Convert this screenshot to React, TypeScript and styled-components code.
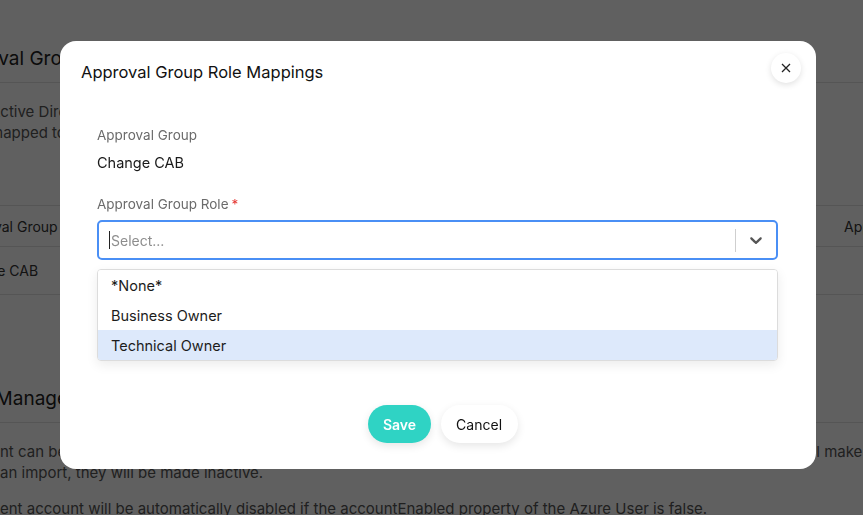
import React from 'react';
import styled, { createGlobalStyle } from 'styled-components';

const GlobalStyle = createGlobalStyle`
  html, body {
    margin: 0;
    padding: 0;
    background: #ffffff;
    font-family: "Inter", "Noto Sans", sans-serif;
    overflow: hidden;
  }
`;

const roles = ['*None*', 'Business Owner', 'Technical Owner'];

/* ===== background page ===== */
const Page = styled.div`
  width: 1000px;
  height: 515px;
  margin-left: -46px;
  color: #333;
  font-size: 15px;
`;

const Section = styled.section`
  padding-top: ${(p: { top: number }) => p.top}px;
`;

const SectionTitle = styled.h2`
  margin: 0;
  padding-bottom: 12px;
  font-size: 19px;
  font-weight: 400;
  color: #222;
  border-bottom: 1px solid #e2e2e2;
  text-indent: -10px;
`;

const Para = styled.p<{ gap?: number; indent?: number }>`
  margin: ${(p) => p.gap ?? 18}px 0 0;
  padding-left: ${(p) => p.indent ?? 36}px;
  line-height: 21px;
  color: #555;
  white-space: nowrap;
`;

const Table = styled.div`
  margin-top: 62px;
  border-top: 1px solid #e2e2e2;
`;

const TableRow = styled.div<{ head?: boolean }>`
  display: grid;
  grid-template-columns: 1fr 110px;
  height: ${(p) => (p.head ? 40 : 47)}px;
  align-items: center;
  border-bottom: 1px solid #e2e2e2;
  font-size: 14px;
  white-space: nowrap;
`;

/* ===== modal ===== */
const Overlay = styled.div`
  position: fixed;
  inset: 0;
  background: rgba(0, 0, 0, 0.625);
`;

const Modal = styled.div`
  position: absolute;
  left: 60px;
  top: 41px;
  width: 756px;
  height: 428px;
  background: #fff;
  border-radius: 16px;
  box-sizing: border-box;
  display: flex;
  flex-direction: column;
`;

const ModalHeader = styled.div`
  display: flex;
  justify-content: space-between;
  align-items: flex-start;
  padding: 12px 15px 0 21px;
`;

const ModalTitle = styled.h1`
  margin: 8px 0 0;
  font-size: 16.5px;
  font-weight: 400;
  color: #111;
  line-height: 22px;
`;

const CloseButton = styled.button`
  width: 30px;
  height: 30px;
  border-radius: 50%;
  border: none;
  background: #fff;
  box-shadow: 0 2px 6px rgba(0, 0, 0, 0.12);
  display: flex;
  align-items: center;
  justify-content: center;
  padding: 0;
  cursor: pointer;
`;

const ModalBody = styled.div`
  padding: 42px 38px 0 37px;
`;

const Label = styled.div`
  font-size: 13.5px;
  color: #6b6b6b;
  line-height: 20px;
`;

const Required = styled.span`
  color: #e53935;
  margin-left: 3px;
`;

const Value = styled.div`
  margin-top: 8px;
  font-size: 14.5px;
  color: #1a1a1a;
  line-height: 20px;
`;

const Field = styled.div`
  margin-top: ${(p: { gap: number }) => p.gap}px;
`;

const SelectWrap = styled.div`
  position: relative;
  margin-top: 6px;
`;

const Control = styled.div`
  height: 40px;
  box-sizing: border-box;
  border: 2px solid #4a8ff5;
  border-radius: 5px;
  display: flex;
  align-items: center;
`;

const Placeholder = styled.div`
  flex: 1;
  padding-left: 10px;
  font-size: 14px;
  color: #8d8d8d;
  display: flex;
  align-items: center;
`;

const Caret = styled.span`
  display: inline-block;
  width: 1px;
  height: 18px;
  background: #222;
  margin-right: 1px;
`;

const Separator = styled.span`
  width: 1px;
  height: 23px;
  background: #cfcfcf;
`;

const Indicator = styled.div`
  width: 40px;
  display: flex;
  align-items: center;
  justify-content: center;
  color: #555;
`;

const Menu = styled.div`
  position: absolute;
  left: 0;
  right: 0;
  top: calc(100% + 9px);
  background: #fff;
  border: 1px solid #dcdcdc;
  border-radius: 4px;
  box-shadow: 0 4px 12px rgba(0, 0, 0, 0.08);
  overflow: hidden;
`;

const Option = styled.div<{ active?: boolean }>`
  height: 30px;
  padding-left: 13px;
  display: flex;
  align-items: center;
  font-size: 14.5px;
  color: #1c1c1c;
  background: ${(p) => (p.active ? '#dde9fb' : '#fff')};
`;

const Footer = styled.div`
  margin-top: auto;
  padding: 0 0 26px 10px;
  display: flex;
  justify-content: center;
  gap: 10px;
`;

const Button = styled.button<{ primary?: boolean }>`
  height: 38px;
  border-radius: 19px;
  border: none;
  padding: 0 ${(p) => (p.primary ? 14.5 : 15.5)}px;
  font-family: inherit;
  font-size: 14px;
  font-weight: ${(p) => (p.primary ? 600 : 400)};
  color: ${(p) => (p.primary ? '#fff' : '#111')};
  background: ${(p) => (p.primary ? '#2fd3c4' : '#fff')};
  box-shadow: 0 3px 8px rgba(0, 0, 0, 0.1);
  cursor: pointer;
`;

export default function App() {
  return (
    <>
      <GlobalStyle />
      <Page>
        <Section top={47}>
          <SectionTitle>Approval Group Role Mappings</SectionTitle>
          <Para>
            Active Directory groups that are mapped to an Approval Group Role will be able
            to approve changes that
            <br />
            mapped to the group.
          </Para>
          <Table>
            <TableRow head>
              <span>Approval Group</span>
              <span>Approval Group Role</span>
            </TableRow>
            <TableRow>
              <span>Change CAB</span>
              <span />
            </TableRow>
          </Table>
        </Section>
        <Section top={92}>
          <SectionTitle>State Management</SectionTitle>
          <Para indent={46}>
            nt can be automatically deactivated when it is not found in the directory. If a
            user is missing from the source, we will make an
            <br />
            an import, they will be made inactive.
          </Para>
          <Para gap={15} indent={46}>
            ent account will be automatically disabled if the accountEnabled property of the
            Azure User is false.
          </Para>
        </Section>
      </Page>
      <Overlay>
        <Modal>
          <ModalHeader>
            <ModalTitle>Approval Group Role Mappings</ModalTitle>
            <CloseButton aria-label="Close">
              <svg width="10" height="10" viewBox="0 0 10 10">
                <path d="M1 1L9 9M9 1L1 9" stroke="#222" strokeWidth="1.3" />
              </svg>
            </CloseButton>
          </ModalHeader>
          <ModalBody>
            <Label>Approval Group</Label>
            <Value>Change CAB</Value>
            <Field gap={21}>
              <Label>
                Approval Group Role<Required>*</Required>
              </Label>
              <SelectWrap>
                <Control>
                  <Placeholder>
                    <Caret />
                    Select...
                  </Placeholder>
                  <Separator />
                  <Indicator>
                    <svg width="20" height="20" viewBox="0 0 20 20">
                      <path
                        fill="currentColor"
                        d="M4.516 7.548c0.436-0.446 1.043-0.481 1.576 0l3.908 3.747 3.908-3.747c0.533-0.481 1.141-0.446 1.574 0 0.436 0.445 0.408 1.197 0 1.615-0.406 0.418-4.695 4.502-4.695 4.502-0.217 0.223-0.502 0.335-0.787 0.335s-0.57-0.112-0.789-0.335c0 0-4.287-4.084-4.695-4.502s-0.436-1.170 0-1.615z"
                      />
                    </svg>
                  </Indicator>
                </Control>
                <Menu>
                  {roles.map((r) => (
                    <Option key={r} active={r === 'Technical Owner'}>
                      {r}
                    </Option>
                  ))}
                </Menu>
              </SelectWrap>
            </Field>
          </ModalBody>
          <Footer>
            <Button primary>Save</Button>
            <Button>Cancel</Button>
          </Footer>
        </Modal>
      </Overlay>
    </>
  );
}
